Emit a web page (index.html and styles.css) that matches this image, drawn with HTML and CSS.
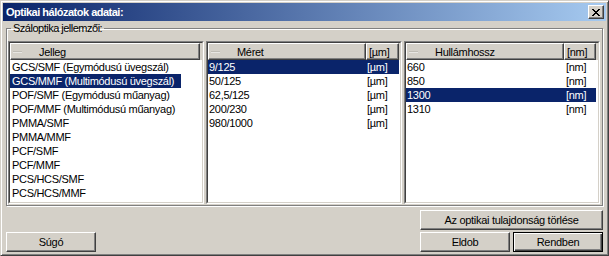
FILE: index.html
```html
<!DOCTYPE html>
<html lang="hu">
<head>
<meta charset="utf-8">
<title>Optikai hálózatok adatai</title>
<link rel="stylesheet" href="styles.css">
</head>
<body>
<div class="window">
  <div class="titlebar">
    <span class="title">Optikai hálózatok adatai:</span>
    <button class="close" aria-label="Bezárás">
      <svg width="8" height="7" viewBox="0 0 8 7" shape-rendering="crispEdges"><path fill="#000" d="M0 0h2v1H0z M6 0h2v1H6z M1 1h2v1H1z M5 1h2v1H5z M2 2h4v1H2z M3 3h2v1H3z M2 4h4v1H2z M1 5h2v1H1z M5 5h2v1H5z M0 6h2v1H0z M6 6h2v1H6z"/></svg>
    </button>
  </div>
  <div class="body">
    <fieldset class="group">
      <legend>Száloptika jellemzői:</legend>
      <div class="lists">
        <div class="list">
          <div class="list-inner">
            <div class="lhead">
              <div class="hcol full"><span class="dash"></span>Jelleg</div>
            </div>
            <div class="row"><span class="label">GCS/SMF (Egymódusú üvegszál)</span></div>
            <div class="row"><span class="label sel">GCS/MMF (Multimódusú üvegszál)</span></div>
            <div class="row"><span class="label">POF/SMF (Egymódusú műanyag)</span></div>
            <div class="row"><span class="label">POF/MMF (Multimódusú műanyag)</span></div>
            <div class="row"><span class="label">PMMA/SMF</span></div>
            <div class="row"><span class="label">PMMA/MMF</span></div>
            <div class="row"><span class="label">PCF/SMF</span></div>
            <div class="row"><span class="label">PCF/MMF</span></div>
            <div class="row"><span class="label">PCS/HCS/SMF</span></div>
            <div class="row"><span class="label">PCS/HCS/MMF</span></div>
          </div>
        </div>
        <div class="list">
          <div class="list-inner">
            <div class="lhead">
              <div class="hcol c1"><span class="dash"></span>Méret</div>
              <div class="hcol c2">[µm]</div>
            </div>
            <div class="row sel"><span class="c1">9/125</span><span class="c2">[µm]</span></div>
            <div class="row"><span class="c1">50/125</span><span class="c2">[µm]</span></div>
            <div class="row"><span class="c1">62,5/125</span><span class="c2">[µm]</span></div>
            <div class="row"><span class="c1">200/230</span><span class="c2">[µm]</span></div>
            <div class="row"><span class="c1">980/1000</span><span class="c2">[µm]</span></div>
          </div>
        </div>
        <div class="list">
          <div class="list-inner">
            <div class="lhead">
              <div class="hcol c1"><span class="dash"></span>Hullámhossz</div>
              <div class="hcol c2 n">[nm]</div>
            </div>
            <div class="row"><span class="c1">660</span><span class="c2 n">[nm]</span></div>
            <div class="row"><span class="c1">850</span><span class="c2 n">[nm]</span></div>
            <div class="row sel"><span class="c1">1300</span><span class="c2 n">[nm]</span></div>
            <div class="row"><span class="c1">1310</span><span class="c2 n">[nm]</span></div>
          </div>
        </div>
      </div>
    </fieldset>
    <div class="actions">
      <div class="act-row">
        <span></span>
        <button class="btn wide">Az optikai tulajdonság törlése</button>
      </div>
      <div class="act-row">
        <button class="btn">Súgó</button>
        <div class="pair">
          <button class="btn">Eldob</button>
          <button class="btn default">Rendben</button>
        </div>
      </div>
    </div>
  </div>
</div>
</body>
</html>
```
FILE: styles.css
```css
* { box-sizing: border-box; }

body {
  margin: 0;
  background: #d4d0c8;
  font-family: "Liberation Sans", Arial, sans-serif;
  font-size: 11px;
  color: #000;
}

.window {
  width: 609px;
  height: 256px;
  background: #d4d0c8;
  border: 1px solid;
  border-color: #d4d0c8 #404040 #404040 #d4d0c8;
  box-shadow: inset 1px 1px #fff, inset -1px -1px #808080;
  padding: 2px;
  display: flex;
  flex-direction: column;
}

.titlebar {
  flex: none;
  height: 18px;
  background: linear-gradient(to right, #0a246a, #a6caf0);
  display: flex;
  align-items: center;
  justify-content: space-between;
  padding: 0 2px 0 3px;
}

.title {
  color: #fff;
  font-weight: bold;
  font-size: 11px;
  letter-spacing: -0.5px;
}

.close {
  width: 16px;
  height: 14px;
  padding: 0;
  background: #d4d0c8;
  border: 1px solid;
  border-color: #fff #404040 #404040 #fff;
  box-shadow: inset -1px -1px #808080;
  display: flex;
  align-items: center;
  justify-content: center;
}

.close svg { display: block; }

.body {
  flex: 1;
  padding: 1px 3px 0;
  display: flex;
  flex-direction: column;
}

.group {
  margin: 0;
  min-width: 0;
  border: 1px solid #808080;
  box-shadow: inset 1px 1px #fff, 1px 1px #fff;
  padding: 0 1px 1px;
}

.group legend {
  margin-left: 3px;
  padding: 0 2px;
  line-height: 13px;
  letter-spacing: -0.5px;
}

.lists {
  display: flex;
  gap: 2px;
  margin-top: 6px;
}

.list {
  width: 196px;
  height: 163px;
  background: #fff;
  border: 1px solid;
  border-color: #808080 #fff #fff #808080;
}

.list-inner {
  height: 100%;
  border: 1px solid;
  border-color: #404040 #d4d0c8 #d4d0c8 #404040;
  overflow: hidden;
}

.lhead {
  display: flex;
  height: 17px;
  background: #d4d0c8;
}

.hcol {
  height: 17px;
  border: 1px solid;
  border-color: #fff #404040 #404040 #fff;
  box-shadow: inset -1px -1px #808080;
  display: flex;
  align-items: center;
  white-space: nowrap;
  letter-spacing: -0.3px;
}

.hcol.full { width: 190px; }
.hcol.c1 { width: 158px; }
.hcol.c2 { width: 33px; padding-left: 2px; }
.hcol.c2.n { width: 32px; }

.dash {
  width: 9px;
  height: 2px;
  margin: 0 17px 0 2px;
  background: #c0bdb5;
  border-bottom: 1px solid #e8e6e2;
}

.row {
  display: flex;
  height: 14px;
  line-height: 14px;
  white-space: nowrap;
  letter-spacing: -0.3px;
}

.row .label {
  padding: 0 7px 0 2px;
}

.row .label.sel,
.row.sel {
  background: #0a246a;
  color: #fff;
}

.row.sel { width: fit-content; }

.row .c1 { width: 158px; padding-left: 1px; }
.row .c2 { width: 33px; padding-left: 1px; }
.row .c2.n { width: 32px; padding-left: 2px; }

.actions {
  margin-top: 4px;
  display: flex;
  flex-direction: column;
  gap: 2px;
}

.act-row {
  display: flex;
  justify-content: space-between;
}

.pair {
  display: flex;
  gap: 3px;
}

.btn {
  width: 90px;
  height: 20px;
  padding: 0;
  font: inherit;
  letter-spacing: -0.3px;
  color: #000;
  background: #d4d0c8;
  border: 1px solid;
  border-color: #fff #404040 #404040 #fff;
  box-shadow: inset -1px -1px #808080;
}

.btn.wide { width: 183px; }

.btn.default {
  border-color: #000;
  box-shadow: inset 1px 1px #fff, inset -1px -1px #404040, inset -2px -2px #808080;
}
```
